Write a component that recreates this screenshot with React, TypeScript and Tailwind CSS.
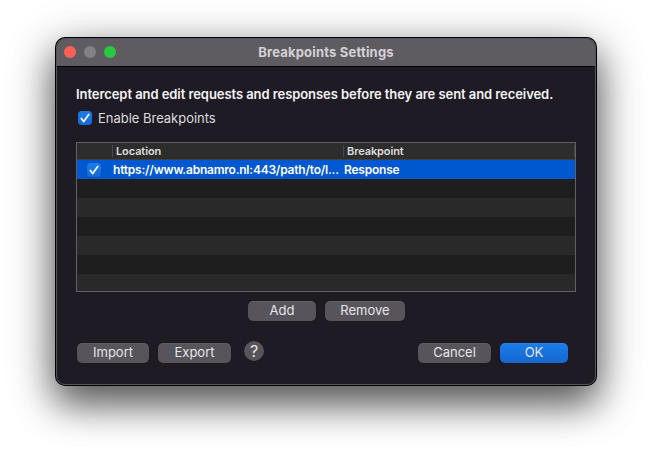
import type { ReactNode } from "react";

function Check({ className = "" }: { className?: string }) {
  return (
    <span
      className={`flex size-3.5 shrink-0 items-center justify-center rounded-[3.5px] bg-gradient-to-b from-[#1c7de9] to-[#1569d2] shadow-[0_0_1px_rgba(0,0,0,0.4)] ${className}`}
    >
      <svg width="14" height="14" viewBox="0 0 14 14" fill="none">
        <path d="M3.3 7.5 L5.8 10.6 L10.7 3.4" stroke="#f1f6fd" strokeWidth="1.8" strokeLinecap="round" strokeLinejoin="round" />
      </svg>
    </span>
  );
}

function Button({ children, className = "" }: { children: ReactNode; className?: string }) {
  return (
    <button
      className={`flex h-5 shrink-0 items-center justify-center rounded-[5px] bg-[#57545b] pb-px text-[13px] leading-none text-[#e6e5e7] shadow-[inset_0_1px_0_rgba(255,255,255,0.06),0_0_1px_rgba(0,0,0,0.5)] ${className}`}
    >
      {children}
    </button>
  );
}

const emptyRows = ["bg-[#1e1e1e]", "bg-[#292929]", "bg-[#1e1e1e]", "bg-[#292929]", "bg-[#1e1e1e]", "bg-[#292929]"];

export default function App() {
  return (
    <div className="h-[459px] w-[652px] overflow-hidden bg-white pt-[37px] pl-[55px] font-['Inter','Liberation_Sans',sans-serif]">
      <div className="h-[349px] w-[542px] rounded-[10px] bg-black p-px shadow-[0_18px_36px_rgba(0,0,0,0.55),0_10px_50px_rgba(0,0,0,0.3)]">
        <div className="flex h-full flex-col overflow-hidden rounded-[9px] border border-[#57545c] bg-[#1f1b24]">
          <header className="-mx-px -mt-px box-border flex h-[29px] shrink-0 items-center border-b border-black bg-[#5f5c61] shadow-[inset_0_1px_0_#7b797d]">
            <div className="flex w-[100px] gap-2 pl-2">
              <span className="size-3 rounded-full bg-[#ff5f57]" />
              <span className="size-3 rounded-full bg-[#828085]" />
              <span className="size-3 rounded-full bg-[#28c840]" />
            </div>
            <h1 className="flex-1 text-center text-[13px] leading-4 font-bold tracking-[0.19px] text-[#d4d0d8]">Breakpoints Settings</h1>
            <div className="w-[100px]" />
          </header>

          <main className="flex flex-col pt-[19px] pl-[19px]">
            <p className="h-4 text-[13px] leading-4 font-semibold tracking-[-0.067px] whitespace-nowrap text-[#f5f4f5]">
              Intercept and edit requests and responses before they are sent and received.
            </p>
            <label className="mt-2 flex h-4 items-center gap-1.5 pl-0.5 text-[13px] leading-4 tracking-[-0.02px] text-[#dddcde]">
              <Check />
              <span>Enable Breakpoints</span>
            </label>

            <section className="mt-4 flex h-[150px] w-[500px] flex-col overflow-hidden border border-[#626065]">
              <div className="flex h-[17px] shrink-0 items-center border-b border-[#404040] bg-[#2d2d2d] text-[11px] leading-4 font-semibold tracking-[-0.1px] text-[#dedede]">
                <span className="w-[35px]" />
                <span className="h-3 w-px bg-[#474747]" />
                <span className="w-[230px] pl-[3px]">Location</span>
                <span className="h-3 w-px bg-[#474747]" />
                <span className="flex-1 pl-[3px]">Breakpoint</span>
                <span className="h-3 w-px bg-[#474747]" />
              </div>
              <div className="flex h-[19px] shrink-0 items-center bg-[#0058d0] text-[12px] leading-4 font-semibold tracking-[-0.22px] text-white">
                <Check className="ml-2.5" />
                <span className="ml-3 w-[231px] whitespace-nowrap">https://www.abnamro.nl:443/path/to/l...</span>
                <span>Response</span>
              </div>
              {emptyRows.map((tone, i) => (
                <div key={i} className={`h-[19px] shrink-0 ${tone}`} />
              ))}
            </section>

            <div className="mt-[9px] flex gap-[9px] pl-[172px]">
              <Button className="w-[68px]">Add</Button>
              <Button className="w-20">Remove</Button>
            </div>

            <footer className="mt-5 flex h-[22px] items-end pl-px">
              <Button className="w-[72px]">Import</Button>
              <Button className="ml-[9px] w-[73px]">Export</Button>
              <button className="mb-0.5 ml-[13px] flex size-5 items-center justify-center rounded-full bg-[#57545b] text-[16px] leading-none text-[#e6e5e7] shadow-[0_0_1px_rgba(0,0,0,0.5)]">
                ?
              </button>
              <Button className="ml-[154px] w-[73px]">Cancel</Button>
              <Button className="ml-[9px] w-[68px] bg-gradient-to-b from-[#1b7dea] to-[#1468d0]">OK</Button>
            </footer>
          </main>
        </div>
      </div>
    </div>
  );
}
